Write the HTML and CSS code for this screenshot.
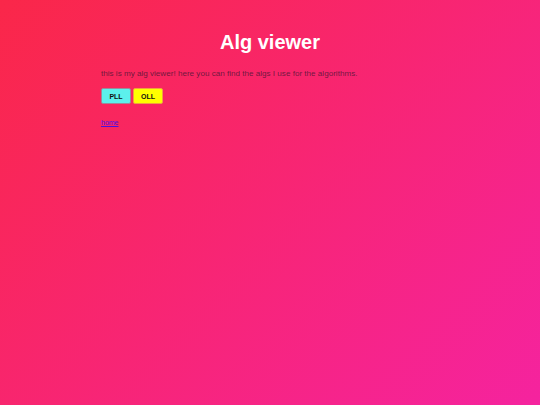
FILE: index.html
```html
<!DOCTYPE html>
<html>
<head>
<meta charset="utf-8">
<title>Alg viewer</title>
<link rel="stylesheet" href="styles.css">
</head>
<body>
<main class="page">
  <h1 class="title">Alg viewer</h1>
  <p class="intro">this is my alg viewer! here you can find the algs I use for the algorithms.</p>
  <div class="buttons">
    <button class="btn btn-pll">PLL</button>
    <button class="btn btn-oll">OLL</button>
  </div>
  <a class="home" href="#">home</a>
</main>
</body>
</html>
```
FILE: styles.css
```css
html, body {
  margin: 0;
  padding: 0;
  height: 100%;
}
body {
  background: linear-gradient(135deg, #fa2749 0%, #f5239f 100%);
  font-family: "Liberation Sans", Arial, sans-serif;
}
.page {
  width: 338px;
  margin: 0 auto;
  padding-top: 30px;
}
.title {
  margin: 0;
  font-size: 20px;
  font-weight: bold;
  color: #ffffff;
  text-align: center;
  line-height: 24px;
}
.intro {
  margin: 15px 0 0;
  font-size: 8.1px;
  line-height: 10px;
  color: rgba(60, 20, 50, 0.75);
}
.buttons {
  display: flex;
  gap: 2px;
  margin-top: 9px;
}
.btn {
  width: 30px;
  height: 16px;
  padding: 0;
  font-family: "Liberation Sans", Arial, sans-serif;
  font-size: 7px;
  font-weight: bold;
  color: #111;
  border-radius: 2px;
  cursor: pointer;
}
.btn-pll {
  background: #5cf0ec;
  border: 1px solid #9a8a9a;
}
.btn-oll {
  background: #ffff00;
  border: 1px solid #f0a040;
}
.home {
  display: inline-block;
  margin-top: 15px;
  font-size: 7px;
  color: #4a10e0;
}
```
